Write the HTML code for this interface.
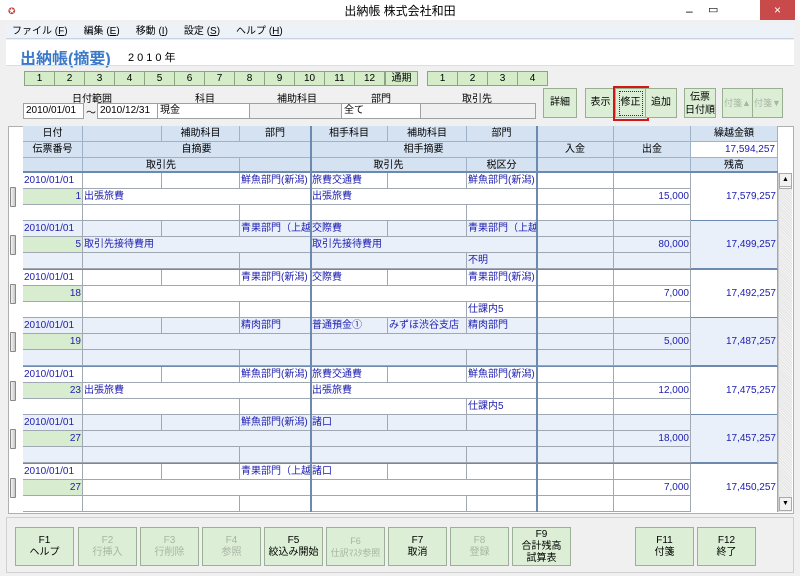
<!DOCTYPE html>
<html><head><meta charset="utf-8"><style>
*{margin:0;padding:0;box-sizing:border-box}
body{width:800px;height:576px;overflow:hidden;background:#f0f0f0;font-family:"Liberation Sans","Noto Sans CJK JP",sans-serif;font-size:10px;color:#000;position:relative}
.ab{position:absolute}
#title{left:0;top:0;width:800px;height:20px;background:#fff;font-size:12px;text-align:center;line-height:22px}
#menu{left:6px;top:23px;width:788px;height:16px;background:#edf2f9;border-bottom:1px solid #c9d3e0;font-size:10px;line-height:17px}
#menu span{margin-left:6px;margin-right:10px}
#white{left:6px;top:40px;width:788px;height:25px;background:#fff}
.mb{position:absolute;top:71px;height:15px;background:#d5ecc8;border:1px solid #8aa580;text-align:center;line-height:13px;font-size:10px}
.lbl{position:absolute;top:90px;font-size:10px}
.inp{position:absolute;top:103px;height:16px;background:#fff;border:1px solid #a0a0a0;font-size:10px;line-height:14px;padding-left:2px}
.btn{position:absolute;background:#dcefd6;border:1px solid #98b08f;text-align:center;font-size:10px}
.dis{color:#a8b4a4}
.hd{position:absolute;background:#d4e2f2;border-right:1px solid #9fb2c8;border-bottom:1px solid #9fb2c8;height:16px;line-height:15px;text-align:center;font-size:10px}
.ent{position:absolute;left:23px;width:755px;height:49px;border-bottom:2px solid #6c8ab0}
.ent i{position:absolute;font-style:normal;height:16px;border-right:1px solid #a0a8b4;border-bottom:1px solid #a0a8b4;line-height:15px;font-size:10px;color:#2020b0;white-space:nowrap;overflow:hidden;padding:0 1px}
.t1{top:0}.t2{top:16px}.t3{top:32px}
.d{left:0;width:60px}.e{left:60px;width:79px}.f{left:139px;width:78px}.g{left:217px;width:71px}
.h{left:288px;width:77px}.k{left:365px;width:79px}.m{left:444px;width:70px}
.n{left:514px;width:77px}.o{left:591px;width:77px;text-align:right}
.bal{left:668px;width:87px;height:48px!important;line-height:48px!important;text-align:right;border-bottom:none!important}
.e2{left:60px;width:228px}.h2{left:288px;width:226px}.e3{left:60px;width:157px}.h3{left:288px;width:156px}
.vn{background:#d8ecd0;text-align:right}
.dv{position:absolute;left:287px;top:0;width:2px;height:48px;background:#6c8ab0}
.dv2{position:absolute;left:513px;top:0;width:2px;height:48px;background:#6c8ab0}
.hnd{position:absolute;left:-13px;top:14px;width:6px;height:20px;background:linear-gradient(90deg,#f4f4f4,#c8c8c8);border:1px solid #888;border-radius:1px}
.fk{position:absolute;top:527px;width:59px;height:39px;background:#dcefd6;border:1px solid #9cb098;text-align:center;font-size:10px;line-height:12px;padding-top:7px}
</style></head><body>
<div class="ab" id="title"><span style="position:absolute;left:8px;top:0;font-size:9px;color:#c04040">✪</span>出納帳 株式会社和田
<span style="position:absolute;left:686px;top:0;">–</span><span style="position:absolute;left:708px;top:-1px;font-size:11px">▭</span>
<span style="position:absolute;left:760px;top:0;width:35px;height:20px;background:#c94a4a;color:#fff;line-height:20px">×</span></div>
<div class="ab" id="menu"><span>ファイル (<u>F</u>)</span><span>編集 (<u>E</u>)</span><span>移動 (<u>I</u>)</span><span>設定 (<u>S</u>)</span><span>ヘルプ (<u>H</u>)</span></div>
<div class="ab" id="white"><span style="position:absolute;left:14px;top:5px;font-size:16px;font-weight:bold;color:#3a78c8">出納帳(摘要)</span><span style="position:absolute;left:122px;top:9px;font-size:11px;letter-spacing:3px">2010年</span></div>
<div class="ab" style="left:6px;top:65px;width:788px;height:1px;background:#ddd"></div>

<div class="mb" style="left:24px;width:31px">1</div><div class="mb" style="left:54px;width:31px">2</div><div class="mb" style="left:84px;width:31px">3</div><div class="mb" style="left:114px;width:31px">4</div><div class="mb" style="left:144px;width:31px">5</div><div class="mb" style="left:174px;width:31px">6</div><div class="mb" style="left:204px;width:31px">7</div><div class="mb" style="left:234px;width:31px">8</div><div class="mb" style="left:264px;width:31px">9</div><div class="mb" style="left:294px;width:31px">10</div><div class="mb" style="left:324px;width:31px">11</div><div class="mb" style="left:354px;width:31px">12</div><div class="mb" style="left:385px;width:33px">通期</div>
<div class="mb" style="left:427px;width:31px">1</div><div class="mb" style="left:457px;width:31px">2</div><div class="mb" style="left:487px;width:31px">3</div><div class="mb" style="left:517px;width:31px">4</div>

<div class="lbl" style="left:72px">日付範囲</div><div class="lbl" style="left:195px">科目</div><div class="lbl" style="left:277px">補助科目</div><div class="lbl" style="left:371px">部門</div><div class="lbl" style="left:462px">取引先</div>
<div class="inp" style="left:23px;width:61px">2010/01/01</div><div class="ab" style="left:86px;top:104px">～</div>
<div class="inp" style="left:97px;width:61px">2010/12/31</div><div class="inp" style="left:157px;width:93px">現金</div>
<div class="inp" style="left:249px;width:93px;background:#f0f0f0"></div><div class="inp" style="left:341px;width:80px">全て</div><div class="inp" style="left:420px;width:116px;background:#f0f0f0"></div>

<div class="btn" style="left:543px;top:88px;width:34px;height:30px;line-height:28px">詳細</div>
<div class="btn" style="left:585px;top:88px;width:31px;height:30px;line-height:28px">表示</div>
<div class="btn" style="left:615px;top:88px;width:31px;height:30px;line-height:28px">修正</div>
<div class="ab" style="left:613px;top:86px;width:36px;height:35px;border:2px solid #d01818"></div>
<div class="ab" style="left:619px;top:91px;width:24px;height:25px;border:1px dotted #333"></div>
<div class="btn" style="left:645px;top:88px;width:32px;height:30px;line-height:28px">追加</div>
<div class="btn" style="left:684px;top:88px;width:32px;height:30px;line-height:13px;padding-top:2px">伝票<br>日付順</div>
<div class="btn dis" style="left:722px;top:88px;width:31px;height:30px;line-height:28px;font-size:9px">付箋▲</div>
<div class="btn dis" style="left:752px;top:88px;width:31px;height:30px;line-height:28px;font-size:9px">付箋▼</div>

<!-- table area -->
<div class="ab" style="left:8px;top:126px;width:786px;height:388px;background:#fff;border:1px solid #b0b0b0"></div>
<div class="hd" style="left:23px;top:126px;width:60px">日付</div><div class="hd" style="left:83px;top:126px;width:79px"></div><div class="hd" style="left:162px;top:126px;width:78px">補助科目</div><div class="hd" style="left:240px;top:126px;width:71px">部門</div>
<div class="hd" style="left:311px;top:126px;width:77px">相手科目</div><div class="hd" style="left:388px;top:126px;width:79px">補助科目</div><div class="hd" style="left:467px;top:126px;width:70px">部門</div>
<div class="hd" style="left:537px;top:126px;width:77px"></div><div class="hd" style="left:614px;top:126px;width:77px"></div><div class="hd" style="left:691px;top:126px;width:87px">繰越金額</div>
<div class="hd" style="left:23px;top:142px;width:60px">伝票番号</div><div class="hd" style="left:83px;top:142px;width:228px">自摘要</div><div class="hd" style="left:311px;top:142px;width:226px">相手摘要</div>
<div class="hd" style="left:537px;top:142px;width:77px">入金</div><div class="hd" style="left:614px;top:142px;width:77px">出金</div><div class="hd" style="left:691px;top:142px;width:87px;background:#fff;text-align:right;color:#2020b0;padding-right:2px">17,594,257</div>
<div class="hd" style="left:23px;top:158px;width:60px"></div><div class="hd" style="left:83px;top:158px;width:157px">取引先</div><div class="hd" style="left:240px;top:158px;width:71px"></div>
<div class="hd" style="left:311px;top:158px;width:156px">取引先</div><div class="hd" style="left:467px;top:158px;width:70px">税区分</div>
<div class="hd" style="left:537px;top:158px;width:77px"></div><div class="hd" style="left:614px;top:158px;width:77px"></div><div class="hd" style="left:691px;top:158px;width:87px">残高</div>
<div class="ab" style="left:310px;top:126px;width:2px;height:46px;background:#6c8ab0"></div>
<div class="ab" style="left:536px;top:126px;width:2px;height:46px;background:#6c8ab0"></div>
<div class="ab" style="left:23px;top:171px;width:755px;height:2px;background:#6c8ab0"></div>

<div class="ent" style="top:173px;background:#fff"><b class="hnd"></b>
<i class="t1 d">2010/01/01</i><i class="t1 e"></i><i class="t1 f"></i><i class="t1 g">鮮魚部門(新潟)</i><i class="t1 h">旅費交通費</i><i class="t1 k"></i><i class="t1 m">鮮魚部門(新潟)</i><i class="t1 n"></i><i class="t1 o"></i><i class="t1 bal">17,579,257</i>
<i class="t2 d vn">1</i><i class="t2 e2">出張旅費</i><i class="t2 h2">出張旅費</i><i class="t2 n"></i><i class="t2 o">15,000</i>
<i class="t3 d"></i><i class="t3 e3"></i><i class="t3 g"></i><i class="t3 h3"></i><i class="t3 m"></i><i class="t3 n"></i><i class="t3 o"></i>
<b class="dv"></b><b class="dv2"></b></div>

<div class="ent" style="top:221px;background:#e9f0fa"><b class="hnd"></b>
<i class="t1 d">2010/01/01</i><i class="t1 e"></i><i class="t1 f"></i><i class="t1 g">青果部門（上越</i><i class="t1 h">交際費</i><i class="t1 k"></i><i class="t1 m">青果部門（上越</i><i class="t1 n"></i><i class="t1 o"></i><i class="t1 bal">17,499,257</i>
<i class="t2 d vn">5</i><i class="t2 e2">取引先接待費用</i><i class="t2 h2">取引先接待費用</i><i class="t2 n"></i><i class="t2 o">80,000</i>
<i class="t3 d"></i><i class="t3 e3"></i><i class="t3 g"></i><i class="t3 h3"></i><i class="t3 m">不明</i><i class="t3 n"></i><i class="t3 o"></i>
<b class="dv"></b><b class="dv2"></b></div>

<div class="ent" style="top:270px;background:#fff"><b class="hnd"></b>
<i class="t1 d">2010/01/01</i><i class="t1 e"></i><i class="t1 f"></i><i class="t1 g">青果部門(新潟)</i><i class="t1 h">交際費</i><i class="t1 k"></i><i class="t1 m">青果部門(新潟)</i><i class="t1 n"></i><i class="t1 o"></i><i class="t1 bal">17,492,257</i>
<i class="t2 d vn">18</i><i class="t2 e2"></i><i class="t2 h2"></i><i class="t2 n"></i><i class="t2 o">7,000</i>
<i class="t3 d"></i><i class="t3 e3"></i><i class="t3 g"></i><i class="t3 h3"></i><i class="t3 m">仕課内5</i><i class="t3 n"></i><i class="t3 o"></i>
<b class="dv"></b><b class="dv2"></b></div>

<div class="ent" style="top:318px;background:#e9f0fa"><b class="hnd"></b>
<i class="t1 d">2010/01/01</i><i class="t1 e"></i><i class="t1 f"></i><i class="t1 g">精肉部門</i><i class="t1 h">普通預金①</i><i class="t1 k">みずほ渋谷支店</i><i class="t1 m">精肉部門</i><i class="t1 n"></i><i class="t1 o"></i><i class="t1 bal">17,487,257</i>
<i class="t2 d vn">19</i><i class="t2 e2"></i><i class="t2 h2"></i><i class="t2 n"></i><i class="t2 o">5,000</i>
<i class="t3 d"></i><i class="t3 e3"></i><i class="t3 g"></i><i class="t3 h3"></i><i class="t3 m"></i><i class="t3 n"></i><i class="t3 o"></i>
<b class="dv"></b><b class="dv2"></b></div>

<div class="ent" style="top:367px;background:#fff"><b class="hnd"></b>
<i class="t1 d">2010/01/01</i><i class="t1 e"></i><i class="t1 f"></i><i class="t1 g">鮮魚部門(新潟)</i><i class="t1 h">旅費交通費</i><i class="t1 k"></i><i class="t1 m">鮮魚部門(新潟)</i><i class="t1 n"></i><i class="t1 o"></i><i class="t1 bal">17,475,257</i>
<i class="t2 d vn">23</i><i class="t2 e2">出張旅費</i><i class="t2 h2">出張旅費</i><i class="t2 n"></i><i class="t2 o">12,000</i>
<i class="t3 d"></i><i class="t3 e3"></i><i class="t3 g"></i><i class="t3 h3"></i><i class="t3 m">仕課内5</i><i class="t3 n"></i><i class="t3 o"></i>
<b class="dv"></b><b class="dv2"></b></div>

<div class="ent" style="top:415px;background:#e9f0fa"><b class="hnd"></b>
<i class="t1 d">2010/01/01</i><i class="t1 e"></i><i class="t1 f"></i><i class="t1 g">鮮魚部門(新潟)</i><i class="t1 h">諸口</i><i class="t1 k"></i><i class="t1 m"></i><i class="t1 n"></i><i class="t1 o"></i><i class="t1 bal">17,457,257</i>
<i class="t2 d vn">27</i><i class="t2 e2"></i><i class="t2 h2"></i><i class="t2 n"></i><i class="t2 o">18,000</i>
<i class="t3 d"></i><i class="t3 e3"></i><i class="t3 g"></i><i class="t3 h3"></i><i class="t3 m"></i><i class="t3 n"></i><i class="t3 o"></i>
<b class="dv"></b><b class="dv2"></b></div>

<div class="ent" style="top:464px;background:#fff;border-bottom:none;height:48px"><b class="hnd"></b>
<i class="t1 d">2010/01/01</i><i class="t1 e"></i><i class="t1 f"></i><i class="t1 g">青果部門（上越</i><i class="t1 h">諸口</i><i class="t1 k"></i><i class="t1 m"></i><i class="t1 n"></i><i class="t1 o"></i><i class="t1 bal">17,450,257</i>
<i class="t2 d vn">27</i><i class="t2 e2"></i><i class="t2 h2"></i><i class="t2 n"></i><i class="t2 o">7,000</i>
<i class="t3 d"></i><i class="t3 e3"></i><i class="t3 g"></i><i class="t3 h3"></i><i class="t3 m"></i><i class="t3 n"></i><i class="t3 o"></i>
<b class="dv"></b><b class="dv2"></b></div>

<div class="ab" style="left:778px;top:173px;width:14px;height:339px;background:repeating-linear-gradient(45deg,#e4e4e4 0 1px,#f4f4f4 1px 2px);border-left:1px solid #ccc"></div>
<div class="ab" style="left:779px;top:173px;width:13px;height:14px;background:#f2f2f2;border:1px solid #aaa;font-size:7px;text-align:center;line-height:12px">▲</div>
<div class="ab" style="left:779px;top:186px;width:13px;height:3px;border:1px solid #aaa;background:#fafafa"></div>
<div class="ab" style="left:779px;top:497px;width:13px;height:14px;background:#f2f2f2;border:1px solid #aaa;font-size:7px;text-align:center;line-height:12px">▼</div>

<!-- bottom -->
<div class="ab" style="left:6px;top:517px;width:788px;height:56px;border:1px solid #d0d0d0"></div>
<div class="fk" style="left:15px">F1<br>ヘルプ</div>
<div class="fk dis" style="left:78px">F2<br>行挿入</div>
<div class="fk dis" style="left:140px">F3<br>行削除</div>
<div class="fk dis" style="left:202px">F4<br>参照</div>
<div class="fk" style="left:264px">F5<br>絞込み開始</div>
<div class="fk dis" style="left:326px;font-size:9px">F6<br>仕訳ﾏｽﾀ参照</div>
<div class="fk" style="left:388px">F7<br>取消</div>
<div class="fk dis" style="left:450px">F8<br>登録</div>
<div class="fk" style="left:512px;padding-top:1px">F9<br>合計残高<br>試算表</div>
<div class="fk" style="left:635px">F11<br>付箋</div>
<div class="fk" style="left:697px">F12<br>終了</div>
</body></html>
